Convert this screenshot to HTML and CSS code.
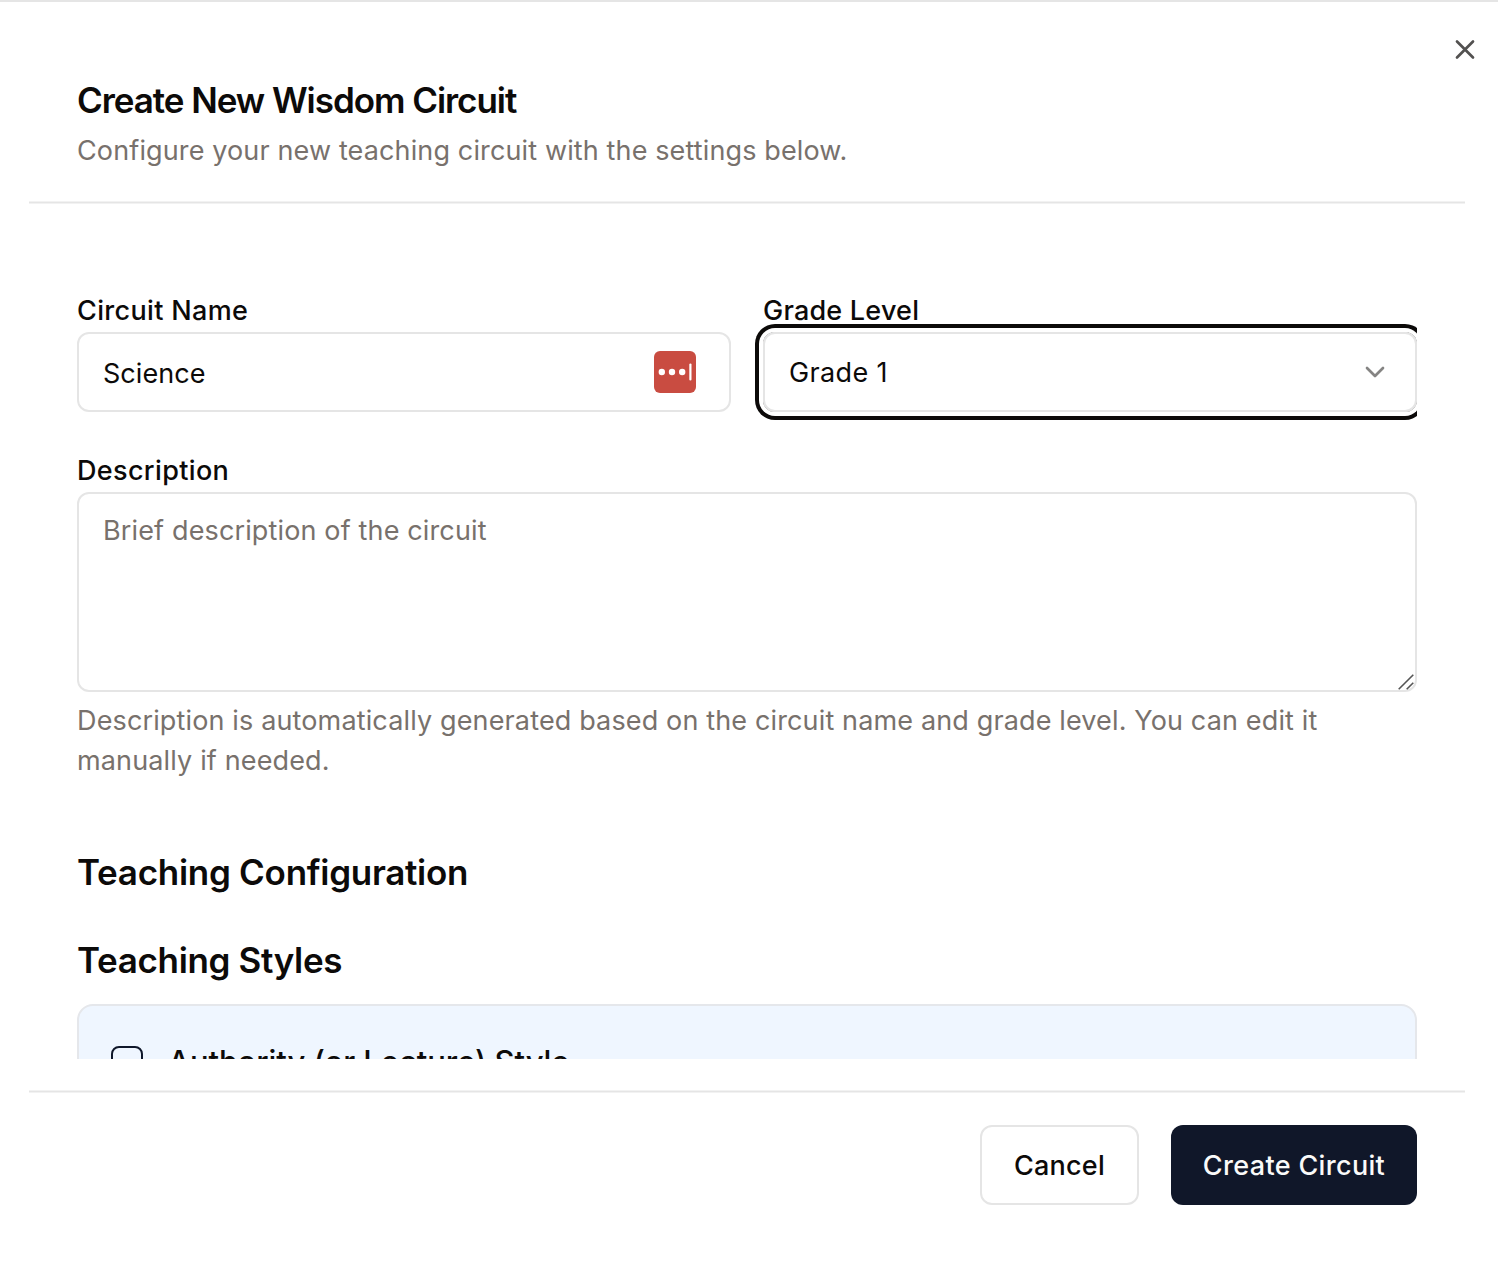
FILE: index.html
```html
<!DOCTYPE html>
<html lang="en">
<head>
<meta charset="utf-8">
<title>Create New Wisdom Circuit</title>
<link rel="stylesheet" href="styles.css">
</head>
<body>
<main class="dialog">
  <button class="close" type="button" aria-label="Close">
    <svg width="32" height="32" viewBox="0 0 24 24" fill="none" stroke="currentColor" stroke-width="2" stroke-linecap="round" stroke-linejoin="round"><path d="M18 6.4 6 18.4M6 6.4l12 12"/></svg>
  </button>
  <header class="header">
    <h1 class="title">Create New Wisdom Circuit</h1>
    <p class="subtitle">Configure your new teaching circuit with the settings below.</p>
  </header>
  <div class="rule"></div>
  <div class="scroll">
    <div class="row">
      <div class="field">
        <label class="label" for="name">Circuit Name</label>
        <div class="control">
          <input class="input" id="name" type="text" value="Science">
          <svg class="manager" width="42" height="42" viewBox="0 0 42 42"><rect width="42" height="42" rx="6" fill="#c94c41"/><circle cx="7.8" cy="21" r="3.2" fill="#fff"/><circle cx="18" cy="21" r="3.2" fill="#fff"/><circle cx="28.2" cy="21" r="3.2" fill="#fff"/><rect x="35.3" y="12.5" width="2.2" height="17" rx="1.1" fill="#fff"/></svg>
        </div>
      </div>
      <div class="field">
        <span class="label label-grade">Grade Level</span>
        <div class="control select">
          <span class="value">Grade 1</span>
          <svg class="chevron" width="32" height="32" viewBox="0 0 24 24" fill="none" stroke="currentColor" stroke-width="2" stroke-linecap="round" stroke-linejoin="round"><path d="m6 9 6 6 6-6"/></svg>
        </div>
      </div>
    </div>
    <div class="field description">
      <label class="label label-description" for="description">Description</label>
      <div class="area">
        <textarea class="textarea" id="description" placeholder="Brief description of the circuit"></textarea>
        <svg class="grip" width="16" height="16" viewBox="0 0 16 16" fill="none" stroke="#555" stroke-width="1.6"><path d="M.7 15.3 15.3.7M8.7 15.3l6.6-6.6"/></svg>
      </div>
      <p class="help">Description is automatically generated based on the circuit name and grade level. You can edit it manually if needed.</p>
    </div>
    <h2 class="heading">Teaching Configuration</h2>
    <h3 class="heading subheading">Teaching Styles</h3>
    <div class="card">
      <span class="checkbox"></span>
      <span class="card-title">Authority (or Lecture) Style</span>
    </div>
  </div>
  <div class="rule"></div>
  <footer class="footer">
    <button class="button outline" type="button">Cancel</button>
    <button class="button primary" type="button">Create Circuit</button>
  </footer>
</main>
</body>
</html>
```

FILE: styles.css
```css
* { box-sizing: border-box; }

body {
  margin: 0;
  background: #fff;
  color: #0c0a09;
  font: 400 27px/40px Inter, "Liberation Sans", sans-serif;
  letter-spacing: 0.14px;
}

h1, h2, h3, p { margin: 0; }

input, textarea, button {
  font: inherit;
  letter-spacing: inherit;
  color: inherit;
}

.dialog {
  position: relative;
  height: 1268px;
  padding: 0 33px 0 29px;
  border-top: 2px solid #e5e5e5;
  overflow: hidden;
  display: flex;
  flex-direction: column;
}

.close {
  position: absolute;
  top: 31px;
  right: 17px;
  width: 32px;
  height: 32px;
  padding: 0;
  border: 0;
  background: none;
  color: #525150;
}

.close svg { display: block; }

.header { height: 199px; padding: 80px 48px 0; }

.title {
  font-size: 35px;
  font-weight: 600;
  line-height: 36px;
  letter-spacing: -1.05px;
}

.subtitle { margin-top: 13px; color: #78716c; letter-spacing: 0.13px; }

.rule {
  flex: none;
  height: 3px;
  background: linear-gradient(#f2f2f2 1px, #e5e5e5 1px 2px, #f2f2f2 2px);
}

.scroll {
  flex: none;
  height: 855px;
  margin: 0 48px 31px 36px;
  padding: 86px 0 0 12px;
  overflow: hidden;
}

.row { display: grid; grid-template-columns: 1fr 1fr; column-gap: 32px; }

.label {
  display: block;
  height: 42px;
  padding-top: 1px;
  font-weight: 500;
  letter-spacing: 0.34px;
}

.label-grade { letter-spacing: 0.21px; }
.label-description { letter-spacing: 0.35px; }

.control {
  height: 80px;
  border: 2px solid #e5e5e5;
  border-radius: 12px;
  display: flex;
  align-items: center;
  justify-content: space-between;
  padding: 0 33px 0 24px;
}

.input {
  flex: 1;
  min-width: 0;
  height: 42px;
  padding: 2px 0 0;
  border: 0;
  outline: 0;
  background: none;
  letter-spacing: 0.05px;
}

.select {
  padding-right: 24px;
  box-shadow: 0 0 0 4px #fff, 0 0 0 8px #0c0a09;
}

.value { padding-top: 2px; letter-spacing: 0.35px; }
.chevron { color: #858483; }

.description { margin-top: 38px; }
.area { position: relative; height: 200px; }

.textarea {
  display: block;
  width: 100%;
  height: 200px;
  padding: 17px 24px 15px;
  border: 2px solid #e5e5e5;
  border-radius: 12px;
  outline: 0;
  resize: none;
}

.textarea::placeholder { color: #78716c; opacity: 1; }
.grip { position: absolute; right: 3px; bottom: 2px; }
.help { margin-top: 9px; color: #78716c; }

.heading {
  margin-top: 63px;
  font-size: 35px;
  font-weight: 600;
  line-height: 56px;
  letter-spacing: -0.28px;
}

.subheading { margin-top: 32px; letter-spacing: -0.34px; }

.card {
  height: 200px;
  margin-top: 16px;
  padding: 32px;
  border: 2px solid #e5e7eb;
  border-radius: 16px;
  background: #eff6ff;
  display: flex;
  align-items: flex-start;
  gap: 25px;
}

.checkbox {
  width: 32px;
  height: 32px;
  margin-top: 8px;
  border: 2px solid #0f172a;
  border-radius: 8px;
}

.card-title {
  font-size: 31px;
  font-weight: 500;
  line-height: 48px;
  letter-spacing: -0.06px;
}

.footer {
  display: flex;
  justify-content: flex-end;
  gap: 32px;
  padding: 32px 48px 0;
}

.button {
  height: 80px;
  padding: 2px 0 0;
  border-radius: 12px;
  font-weight: 500;
  letter-spacing: 0.34px;
}

.outline { width: 159px; border: 2px solid #e5e5e5; background: #fff; letter-spacing: 0.2px; }
.primary { width: 246px; border: 0; background: #101729; color: #fafaf9; }
```
